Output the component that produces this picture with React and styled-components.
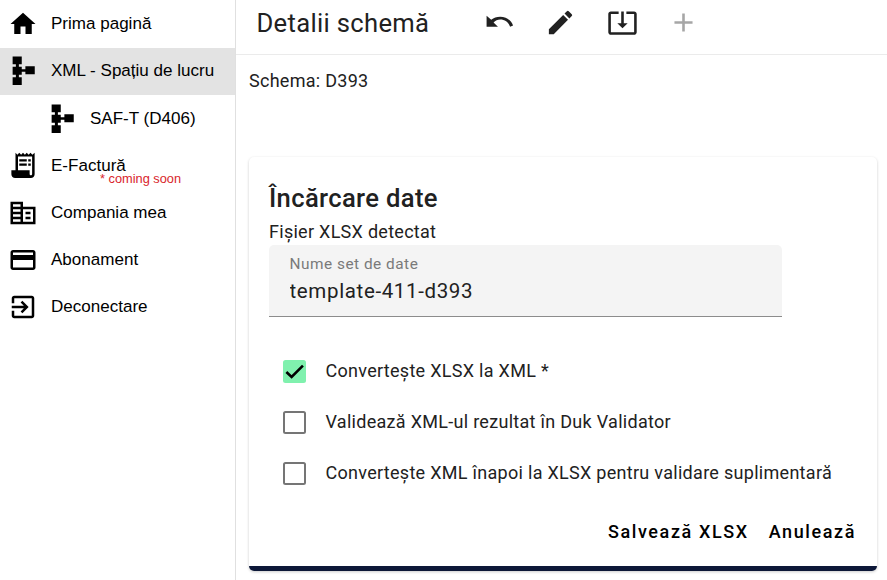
import { useState } from 'react';
import styled, { createGlobalStyle } from 'styled-components';

const GlobalStyle = createGlobalStyle`
	* {
		box-sizing: border-box;
	}

	body {
		margin: 0;
		background-color: #fff;
		font-family: Roboto, sans-serif;
		color: #212121;
	}
`;

const Page = styled.div`
	display: flex;
	height: 580px;
	overflow: hidden;
`;

const Sidebar = styled.nav`
	width: 236px;
	flex-shrink: 0;
	border-right: 1px solid #e0e0e0;
	font-family: "Liberation Sans", Arial, sans-serif;
`;

const MenuItem = styled.a`
	display: flex;
	align-items: center;
	height: ${props => props.$first ? '48px' : '47px'};
	padding-left: ${props => props.$nested ? '47px' : '8px'};
	padding-bottom: ${props => props.$active ? '2px' : '0'};
	gap: 13px;
	background-color: ${props => props.$active ? '#e3e3e3' : 'transparent'};
	color: #000;
	font-size: 17.05px;
	cursor: pointer;
`;

const MenuText = styled.span`
	position: relative;
	white-space: nowrap;
	line-height: 20px;
`;

const Soon = styled.small`
	position: absolute;
	left: 49px;
	top: 16px;
	color: #d9252b;
	font-size: 12.8px;
	line-height: 14px;
`;

const Icon = styled.svg`
	width: ${({ $size }) => $size || 30}px;
	height: ${({ $size }) => $size || 30}px;
	flex-shrink: 0;
	fill: currentColor;
`;

const Main = styled.main`
	flex: 1;
	min-width: 0;
`;

const TopBar = styled.header`
	display: flex;
	align-items: center;
	height: 55px;
	padding: 0 0 8px 20.5px;
	border-bottom: 1px solid #ebebeb;
`;

const Title = styled.h1`
	width: 227px;
	margin: 0;
	font-size: 25.6px;
	font-weight: 400;
	line-height: 32px;
	letter-spacing: 0.32px;
	white-space: nowrap;
`;

const Tools = styled.div`
	display: flex;
	gap: 30.5px;
	padding-bottom: 1px;
`;

const ToolButton = styled.button`
	display: flex;
	padding: 0;
	border: 0;
	background: none;
	color: #212121;

	&:disabled {
		color: #a6a6a6;
	}
`;

const Content = styled.div`
	padding: 14px 10px 0 13px;
`;

const Text = styled.p`
	margin: 0;
	font-size: 18px;
	line-height: 24px;
	letter-spacing: 0.28px;
`;

const Card = styled.section`
	height: 414px;
	margin-top: 64px;
	padding: 24px 20px 0;
	border-bottom: 5px solid #0d1838;
	border-radius: 5px;
	box-shadow: 0 1px 3px rgba(0, 0, 0, 0.2);
`;

const CardTitle = styled.h2`
	margin: 0 0 5px;
	font-size: 25.6px;
	font-weight: 500;
	line-height: 34px;
	letter-spacing: 0.35px;
`;

const Field = styled.label`
	display: flex;
	flex-direction: column;
	width: 513px;
	height: 72px;
	margin-top: 1px;
	padding: 9px 21px 0 20.5px;
	border-bottom: 1px solid #8c8c8c;
	border-radius: 5px 5px 0 0;
	background-color: #f4f4f4;
`;

const FieldLabel = styled.span`
	color: #7a7a7a;
	font-size: 15.4px;
	line-height: 20px;
	letter-spacing: 0.5px;
`;

const Input = styled.input`
	width: 100%;
	height: 30px;
	margin-top: 2px;
	padding: 0;
	border: 0;
	outline: 0;
	background: none;
	color: #212121;
	font-family: inherit;
	font-size: 20.5px;
	letter-spacing: 0.64px;
`;

const Options = styled.div`
	display: flex;
	flex-direction: column;
	padding: 28.5px 0 0 14px;
`;

const Option = styled.label`
	display: flex;
	align-items: center;
	gap: 19.5px;
	height: 51.2px;
	font-size: 18px;
	letter-spacing: 0.29px;
	white-space: nowrap;
`;

const OptionText = styled.span`
	padding-bottom: 1px;
`;

const Box = styled.button`
	display: flex;
	width: 23px;
	height: 23px;
	padding: 0;
	border: ${({ $checked }) => $checked ? '0' : '2px solid #757575'};
	border-radius: 2.5px;
	background-color: ${({ $checked }) => $checked ? '#80f1ae' : '#fff'};
`;

const Tick = styled.svg`
	width: 23px;
	height: 23px;
	fill: none;
	stroke: #000;
	stroke-width: 2.7;
`;

const Actions = styled.div`
	display: flex;
	justify-content: flex-end;
	gap: 20px;
	padding: 20.5px 1px 0 0;
`;

const Button = styled.button`
	padding: 0;
	border: 0;
	background: none;
	color: #000;
	font-family: inherit;
	font-size: 18px;
	font-weight: 500;
	line-height: 24px;
	letter-spacing: 1.6px;
`;

const icons = {
	home: 'M10 20v-6h4v6h5v-8h3L12 3 2 12h3v8z',
	schema: 'M13.900 8.200v2.300h-2.900V8.600H8.700V6.600H11V.3H3.700v6.300h2.600v2H3.700v6.300h2.600v2H3.700v6.300H11v-6.300H8.700v-2H11v-2.400h2.900v2h7.500V8.200z',
	receipt: 'M19.500 2.900 18 1.400l-1.500 1.500L15 1.400l-1.500 1.500L12 1.400l-1.500 1.500L9 1.400 7.500 2.900 6 1.400v14H2.700v3.200c0 1.660 1.340 3 3 3h12.600c1.660 0 3-1.340 3-3V1.400l-1.800 1.500zM19.300 18.400c0 .55-.45 1-1 1s-1-.45-1-1v-3H8V4.400h11.300v14zM9 6.600h6v1.800H9zM16.200 6.600h2v1.800h-2zM9 10h6v1.800H9zM16.200 10h2v1.800h-2z',
	company: 'M12 7V3H2v18h20V7H12zM10 19H4v-2h6v2zm0-4H4v-2h6v2zm0-4H4V9h6v2zm0-4H4V5h6v2zm10 12h-8V9h8v10zm-2-8h-4v2h4v-2zm0 4h-4v2h4v-2z',
	card: 'M20 4H4c-1.110 0-1.990.89-1.990 2L2 18c0 1.110.89 2 2 2h16c1.110 0 2-.89 2-2V6c0-1.110-.89-2-2-2zm0 14H4v-6h16v6zm0-10H4V6h16v2z',
	exit: 'M10.090 15.590 11.500 17l5-5-5-5-1.410 1.410L12.670 11H3v2h9.670l-2.580 2.590zM19 3H5c-1.110 0-2 .9-2 2v4h2V5h14v14H5v-4H3v4c0 1.100.89 2 2 2h14c1.100 0 2-.9 2-2V5c0-1.100-.9-2-2-2z',
	undo: 'M12.500 7.500c-2.650 0-5.050.9-6.900 2.400L2 6.800v8.400h8.800l-3.400-3.200c1.400-1.300 3.200-2.300 5.100-2.300 3.500 0 6.500 2.100 7.700 5.500l2.300-.8C21.100 10.400 17.200 7.500 12.500 7.500z',
	edit: 'M3 17.250V21h3.750L17.810 9.940l-3.750-3.750L3 17.250zM20.710 7.040a.996.996 0 0 0 0-1.410l-2.340-2.340a.996.996 0 0 0-1.410 0l-1.830 1.830 3.750 3.750 1.830-1.830z',
	download: 'm12 16.500 4-4h-3v-9h-2v9H8l4 4zm9-13h-6v1.990h6v14.030H3V5.490h6V3.500H3c-1.100 0-2 .9-2 2v14c0 1.100.9 2 2 2h18c1.100 0 2-.9 2-2v-14c0-1.100-.9-2-2-2z',
	add: 'M19 13h-6v6h-2v-6H5v-2h6V5h2v6h6v2z',
};

const menu = [
	{ icon: 'home', text: 'Prima pagină' },
	{ icon: 'schema', text: 'XML - Spațiu de lucru', active: true },
	{ icon: 'schema', text: 'SAF-T (D406)', nested: true },
	{ icon: 'receipt', text: 'E-Factură', soon: true },
	{ icon: 'company', text: 'Compania mea' },
	{ icon: 'card', text: 'Abonament' },
	{ icon: 'exit', text: 'Deconectare' },
];

const labels = [
	'Convertește XLSX la XML *',
	'Validează XML-ul rezultat în Duk Validator',
	'Convertește XML înapoi la XLSX pentru validare suplimentară',
];

function Glyph({ name, size }) {
	return (
		<Icon viewBox="0 0 24 24" $size={size}>
			<path d={icons[name]} />
		</Icon>
	);
}

function App() {
	const [name, setName] = useState('template-411-d393');
	const [checked, setChecked] = useState([true, false, false]);

	const toggle = (index) => {
		setChecked(prev => prev.map((value, i) => i === index ? !value : value));
	};

	return (
		<Page>
			<GlobalStyle />
			<Sidebar>
				{menu.map((item, i) => (
					<MenuItem key={item.text} $first={i === 0} $active={item.active} $nested={item.nested}>
						<Glyph name={item.icon} />
						<MenuText>
							{item.text}
							{item.soon && <Soon>* coming soon</Soon>}
						</MenuText>
					</MenuItem>
				))}
			</Sidebar>

			<Main>
				<TopBar>
					<Title>Detalii schemă</Title>
					<Tools>
						<ToolButton><Glyph name="undo" size={31} /></ToolButton>
						<ToolButton><Glyph name="edit" size={31} /></ToolButton>
						<ToolButton><Glyph name="download" size={31} /></ToolButton>
						<ToolButton disabled><Glyph name="add" size={31} /></ToolButton>
					</Tools>
				</TopBar>

				<Content>
					<Text>Schema: D393</Text>
					<Card>
						<CardTitle>Încărcare date</CardTitle>
						<Text>Fișier XLSX detectat</Text>
						<Field>
							<FieldLabel>Nume set de date</FieldLabel>
							<Input value={name} onChange={(e) => setName(e.target.value)} />
						</Field>
						<Options>
							{labels.map((label, i) => (
								<Option key={label}>
									<Box $checked={checked[i]} onClick={() => toggle(i)}>
										{checked[i] && <Tick viewBox="0 0 24 24"><path d="M3.500 12.500 9 17.700 20.800 5.900" /></Tick>}
									</Box>
									<OptionText>{label}</OptionText>
								</Option>
							))}
						</Options>
						<Actions>
							<Button>Salvează XLSX</Button>
							<Button>Anulează</Button>
						</Actions>
					</Card>
				</Content>
			</Main>
		</Page>
	);
}

export default App;
